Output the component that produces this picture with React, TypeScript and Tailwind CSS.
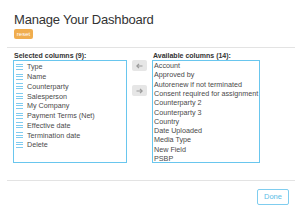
import React from "react";

const selected = [
  "Type",
  "Name",
  "Counterparty",
  "Salesperson",
  "My Company",
  "Payment Terms (Net)",
  "Effective date",
  "Termination date",
  "Delete",
];

const available = [
  "Account",
  "Approved by",
  "Autorenew if not terminated",
  "Consent required for assignment",
  "Counterparty 2",
  "Counterparty 3",
  "Country",
  "Date Uploaded",
  "Media Type",
  "New Field",
  "PSBP",
];

const Grip = () => (
  <span className="flex w-[7px] shrink-0 flex-col gap-[1.5px]">
    <span className="h-px w-full bg-[#7fcbef]" />
    <span className="h-px w-full bg-[#7fcbef]" />
    <span className="h-px w-full bg-[#7fcbef]" />
  </span>
);

const Arrow = ({ dir }: { dir: "left" | "right" }) => (
  <button className="flex h-[11px] w-[15px] items-center justify-center rounded-[2px] bg-[#e6e6e6]">
    <svg width="7" height="6" viewBox="0 0 7 6" aria-hidden>
      {dir === "left" ? (
        <path d="M6.5 3H1M3 0.8L0.8 3L3 5.2" fill="none" stroke="#9a9a9a" strokeWidth="1.2" />
      ) : (
        <path d="M0.5 3H6M4 0.8L6.2 3L4 5.2" fill="none" stroke="#9a9a9a" strokeWidth="1.2" />
      )}
    </svg>
  </button>
);

export default function App() {
  return (
    <div className="flex h-[216px] w-[302px] flex-col bg-white font-['Liberation_Sans',Arial,sans-serif] text-[#333]">
      <div className="flex flex-col items-start px-[14px] pt-[12px]">
        <h1 className="text-[13px] leading-[16px] tracking-[-0.2px] text-[#333]">
          Manage Your Dashboard
        </h1>
        <span className="mt-[1px] flex h-[10px] w-[19px] items-center justify-center rounded-[2px] bg-[#f0ad4e] text-[6px] leading-none text-white">
          reset
        </span>
      </div>

      <div className="mx-[7px] mt-[8px] h-px bg-[#e3e3e3]" />

      <div className="flex px-[13px] pt-[3px]">
        <div className="flex w-[114px] flex-col">
          <div className="pl-px text-[7px] font-bold leading-[9px] text-[#333]">
            Selected columns (9):
          </div>
          <ul className="h-[103px] overflow-hidden border border-[#69c6ee] pt-[1px]">
            {selected.map((item) => (
              <li
                key={item}
                className="flex h-[9.75px] items-center gap-[4px] pl-[2px] text-[7.2px] leading-none text-[#4a4a4a]"
              >
                <Grip />
                {item}
              </li>
            ))}
          </ul>
        </div>

        <div className="flex w-[25px] flex-col items-center gap-[14px] pt-[9px]">
          <Arrow dir="left" />
          <Arrow dir="right" />
        </div>

        <div className="flex w-[108px] flex-col">
          <div className="pl-px text-[7px] font-bold leading-[9px] text-[#333]">
            Available columns (14):
          </div>
          <ul className="h-[103px] overflow-hidden border border-[#69c6ee]">
            {available.map((item) => (
              <li
                key={item}
                className="flex h-[9.3px] shrink-0 items-center whitespace-nowrap pl-px text-[7.2px] leading-none text-[#4a4a4a]"
              >
                {item}
              </li>
            ))}
          </ul>
        </div>
      </div>

      <div className="mx-[7px] mt-[17px] h-px bg-[#e3e3e3]" />

      <div className="flex justify-end px-[13px] pt-[8px]">
        <button className="flex h-[16px] w-[32px] items-center justify-center rounded-[2px] border border-[#7fcdef] text-[7.5px] leading-none text-[#5bbde6]">
          Done
        </button>
      </div>
    </div>
  );
}
